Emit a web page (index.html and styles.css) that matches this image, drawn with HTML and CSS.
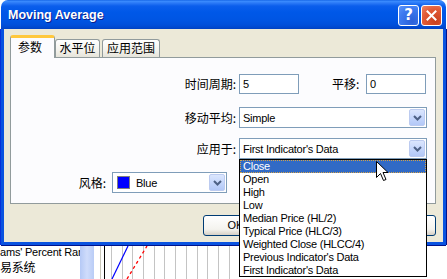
FILE: index.html
```html
<!DOCTYPE html>
<html>
<head>
<meta charset="utf-8">
<link rel="stylesheet" href="styles.css">
</head>
<body>
<div class="screen">
  <div class="backdrop">
    <div class="bg-strip">
      <div class="bg-list">
        <div class="bg-item">ams' Percent Rar</div>
        <div class="bg-item cjk">易系统</div>
      </div>
      <div class="bg-scroll"><div class="thumb"></div><div class="track"></div></div>
      <div class="bg-chart">
        <svg width="343" height="34" viewBox="0 0 343 34">
          <line x1="0.5" y1="0" x2="0.5" y2="34" stroke="#000"/>
          <g stroke="#c4c4c4" stroke-width="1">
            <line x1="7.5" y1="0" x2="7.5" y2="34"/>
            <line x1="18.5" y1="0" x2="18.5" y2="34"/>
            <line x1="28.5" y1="0" x2="28.5" y2="34"/>
            <line x1="39.5" y1="0" x2="39.5" y2="34"/>
            <line x1="50.5" y1="0" x2="50.5" y2="34"/>
            <line x1="60.5" y1="0" x2="60.5" y2="34"/>
            <line x1="71.5" y1="0" x2="71.5" y2="34"/>
            <line x1="82.5" y1="0" x2="82.5" y2="34"/>
            <line x1="93.5" y1="0" x2="93.5" y2="34"/>
            <line x1="103.5" y1="0" x2="103.5" y2="34"/>
            <line x1="114.5" y1="0" x2="114.5" y2="34"/>
            <line x1="125.5" y1="0" x2="125.5" y2="34"/>
          </g>
          <line x1="8" y1="34" x2="24" y2="1" stroke="#0000ff" stroke-width="1.2"/>
          <line x1="23" y1="34" x2="43" y2="1" stroke="#ff0000" stroke-width="1.3" stroke-dasharray="3 3"/>
        </svg>
      </div>
    </div>
  </div>

  <div class="window">
    <div class="titlebar">
      <span class="title">Moving Average</span>
      <div class="tb-buttons">
        <span class="tb-btn help">?</span>
        <span class="tb-btn close">
          <svg width="11" height="11" viewBox="0 0 11 11"><path d="M1.5 1.5 L9.5 9.5 M9.5 1.5 L1.5 9.5" stroke="#fff" stroke-width="2" stroke-linecap="square"/></svg>
        </span>
      </div>
    </div>
    <div class="body">
      <div class="tabs">
        <div class="tab active">参数</div>
        <div class="tab">水平位</div>
        <div class="tab tab3">应用范围</div>
      </div>
      <div class="panel">
        <div class="row row1">
          <span class="label lbl-main">时间周期:</span>
          <span class="input w60">5</span>
          <span class="label lbl-shift">平移:</span>
          <span class="input w60">0</span>
        </div>
        <div class="row row2">
          <span class="label lbl-main">移动平均:</span>
          <span class="select wide"><span class="sel-text">Simple</span><span class="arrow"><svg width="9" height="6" viewBox="0 0 9 6"><path d="M1 1 L4.5 4.5 L8 1" fill="none" stroke="#4d6185" stroke-width="2"/></svg></span></span>
        </div>
        <div class="row row3">
          <span class="label lbl-main">应用于:</span>
          <span class="select wide"><span class="sel-text">First Indicator's Data</span><span class="arrow"><svg width="9" height="6" viewBox="0 0 9 6"><path d="M1 1 L4.5 4.5 L8 1" fill="none" stroke="#4d6185" stroke-width="2"/></svg></span></span>
        </div>
        <div class="row row4">
          <span class="label lbl-style">风格:</span>
          <span class="select color"><span class="swatch"></span><span class="sel-text">Blue</span><span class="arrow"><svg width="9" height="6" viewBox="0 0 9 6"><path d="M1 1 L4.5 4.5 L8 1" fill="none" stroke="#4d6185" stroke-width="2"/></svg></span></span>
        </div>
      </div>
      <div class="buttons">
        <span class="button">OK</span>
        <span class="button"></span>
        <span class="button"></span>
      </div>
    </div>
  </div>

  <div class="listbox">
    <div class="opt selected">Close</div>
    <div class="opt">Open</div>
    <div class="opt">High</div>
    <div class="opt">Low</div>
    <div class="opt">Median Price (HL/2)</div>
    <div class="opt">Typical Price (HLC/3)</div>
    <div class="opt">Weighted Close (HLCC/4)</div>
    <div class="opt">Previous Indicator's Data</div>
    <div class="opt">First Indicator's Data</div>
  </div>

  <svg class="cursor" width="13" height="21" viewBox="0 0 13 21">
    <path d="M0.5 0.5 L0.5 16.5 L4.5 12.5 L7.5 19.5 L10 18.5 L7 11.5 L12 11.5 Z" fill="#fff" stroke="#000" stroke-width="1"/>
  </svg>
</div>
</body>
</html>
```
FILE: styles.css
```css
* { box-sizing: border-box; }
html, body { margin: 0; padding: 0; }
body {
  width: 447px;
  height: 279px;
  overflow: hidden;
  background: #fff;
  font-family: "Liberation Sans", Arial, sans-serif;
  font-size: 11px;
  color: #000;
}
.screen {
  position: relative;
  width: 447px;
  height: 279px;
  overflow: hidden;
}

/* ---------- background application ---------- */
.backdrop {
  position: absolute;
  inset: 0;
  display: flex;
  flex-direction: column;
  justify-content: flex-end;
}
.bg-strip {
  height: 34px;
  display: flex;
}
.bg-list {
  width: 80px;
  overflow: hidden;
  white-space: nowrap;
}
.bg-item {
  height: 14px;
  line-height: 14px;
  letter-spacing: -0.2px;
}
.bg-item.cjk {
  font-family: "Noto Sans CJK SC", sans-serif;
  font-size: 12px;
  line-height: 16px;
  height: 16px;
}
.bg-scroll {
  width: 24px;
  display: flex;
}
.bg-scroll .thumb {
  width: 14px;
  background: linear-gradient(90deg, #b5c9f6, #cfdcfb 50%, #b9ccf6);
}
.bg-scroll .track {
  flex: 1;
  background: linear-gradient(90deg, #fff 0, #fff 6px, #c9c7ba 6px, #c9c7ba 7px, #fff 7px);
}
.bg-chart {
  flex: 1;
}
.bg-chart svg { display: block; }

/* ---------- window ---------- */
.window {
  position: absolute;
  left: 1px;
  top: 0;
  width: 445px;
  height: 245px;
  display: flex;
  flex-direction: column;
}
.titlebar {
  height: 29px;
  flex: none;
  border-radius: 7px 7px 0 0;
  background: linear-gradient(#0a5ae0 0, #3d8eff 1px, #2b7af7 3px, #0b5eec 6px, #0058e8 12px, #0055e3 20px, #004fda 25px, #0046cb 28px, #0040bf 29px);
  display: flex;
  align-items: center;
  padding: 0 4px 0 7px;
}
.title {
  flex: 1;
  color: #fff;
  font-family: "Liberation Sans", Arial, sans-serif;
  font-weight: bold;
  font-size: 12.5px;
  text-shadow: 1px 1px 0 #0a1e8c;
  padding-top: 1px;
}
.tb-buttons {
  display: flex;
  gap: 2px;
  padding-top: 1px;
}
.tb-btn {
  width: 21px;
  height: 21px;
  border: 1px solid #fff;
  border-radius: 3px;
  display: flex;
  align-items: center;
  justify-content: center;
  color: #fff;
}
.tb-btn.help {
  background: radial-gradient(circle at 70% 80%, #2b60d8, #3c7af0 60%, #5d95fa);
  font-family: "DejaVu Sans", sans-serif;
  font-weight: bold;
  font-size: 15px;
  line-height: 1;
}
.tb-btn.close {
  background: radial-gradient(circle at 70% 80%, #c8401e, #e25b37 60%, #ee8566);
}
.tb-btn.close svg { display: block; }

.body {
  flex: 1;
  background: #ece9d8;
  border: 3px solid #0a53e0;
  border-top: none;
  box-shadow: 1px 0 0 #00138c, -1px 0 0 #0831d9, 0 1px 0 #00138c;
  padding: 6px 7px 0 6px;
  display: flex;
  flex-direction: column;
}

/* tabs */
.tabs {
  display: flex;
  align-items: flex-end;
  height: 22px;
  position: relative;
  z-index: 1;
}
.tab {
  height: 18px;
  border: 1px solid #919b9c;
  border-bottom: none;
  border-radius: 3px 3px 0 0;
  background: linear-gradient(#ffffff, #f3f2ec 60%, #e6e4da);
  font-family: "Noto Sans CJK SC", sans-serif;
  font-size: 12px;
  line-height: 16px;
  padding: 0;
  width: 45px;
  text-align: center;
  white-space: nowrap;
}
.tab.active {
  height: 23px;
  margin-bottom: -1px;
  border-top: 3px solid #ffc83c;
  background: #fcfcfe;
  line-height: 18px;
  padding-left: 7px;
  text-align: left;
}
.tab.tab3 {
  width: 58px;
  margin-left: 2px;
}

.panel {
  width: 426px;
  height: 147px;
  border: 1px solid #919b9c;
  background: #fcfcfe;
  display: flex;
  flex-direction: column;
  padding-top: 16px;
}
.row {
  display: flex;
  align-items: center;
}
.row1 { height: 20px; }
.row2 { height: 21px; margin-top: 13px; }
.row3 { height: 21px; margin-top: 10px; }
.row4 { height: 21px; margin-top: 13px; }

.label {
  font-family: "Noto Sans CJK SC", sans-serif;
  font-size: 12px;
  line-height: 14px;
  white-space: nowrap;
}
.lbl-main {
  width: 225px;
  text-align: right;
  margin-right: 3px;
}
.lbl-shift {
  margin-left: 33px;
  width: 31px;
  margin-right: 3px;
}
.lbl-style {
  width: 95px;
  text-align: right;
  margin-right: 6px;
}

.input {
  height: 20px;
  border: 1px solid #7f9db9;
  background: #fff;
  padding-left: 3px;
  line-height: 18px;
}
.w60 { width: 60px; }

.select {
  height: 21px;
  border: 1px solid #7f9db9;
  background: #fff;
  display: flex;
  align-items: center;
  padding: 0 1px 0 3px;
}
.select.wide { width: 188px; }
.select.color { width: 115px; }
.sel-text {
  flex: 1;
  white-space: nowrap;
  letter-spacing: -0.25px;
}
.arrow {
  width: 16px;
  height: 17px;
  border: 1px solid #bccbf0;
  border-radius: 2px;
  background: linear-gradient(#dbe6fd, #c2d4fb 60%, #b3c8f7);
  display: flex;
  align-items: center;
  justify-content: center;
}
.arrow svg { display: block; }
.swatch {
  width: 13px;
  height: 13px;
  background: #0000ff;
  border: 1px solid #808080;
  margin: 0 6px 0 1px;
}

.buttons {
  display: flex;
  margin-top: 11px;
  padding-left: 193px;
  gap: 19px;
}
.button {
  width: 65px;
  height: 21px;
  border: 1px solid #003c74;
  border-radius: 3px;
  background: linear-gradient(#ffffff, #f4f3ee 70%, #d6d0c5);
  text-align: center;
  line-height: 19px;
}

/* ---------- dropdown list ---------- */
.listbox {
  position: absolute;
  left: 239px;
  top: 159px;
  width: 188px;
  height: 118px;
  border: 1px solid #000;
  background: #fff;
  z-index: 5;
  overflow: hidden;
}
.opt {
  height: 13px;
  line-height: 13px;
  padding-left: 3px;
  letter-spacing: -0.25px;
  white-space: nowrap;
}
.opt.selected {
  background: #316ac5;
  color: #fff;
  outline: 1px dotted #d4a247;
  outline-offset: -1px;
}

.cursor {
  position: absolute;
  left: 376px;
  top: 161px;
  z-index: 10;
}
```
